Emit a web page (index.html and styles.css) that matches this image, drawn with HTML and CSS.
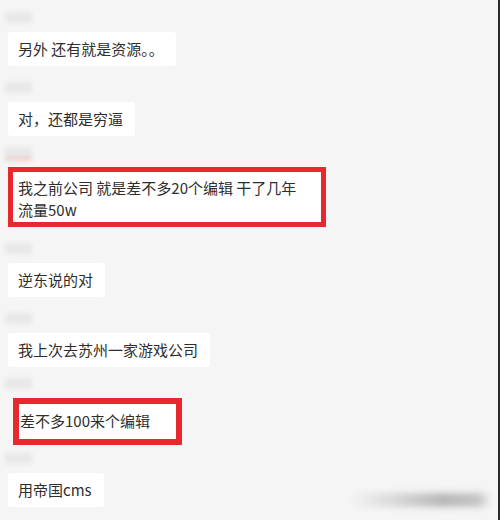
FILE: index.html
```html
<!DOCTYPE html>
<html lang="zh-CN">
<head>
    <meta charset="UTF-8">
    <meta name="viewport" content="width=device-width, initial-scale=1.0">
    <title>聊天记录</title>
    <link rel="stylesheet" href="styles.css">
</head>
<body>
    <div class="chat">
        <div class="msg">
            <div class="name"></div>
            <div class="bubble">另外 还有就是资源。。</div>
        </div>

        <div class="msg">
            <div class="name"></div>
            <div class="bubble">对，还都是穷逼</div>
        </div>

        <div class="msg hl">
            <div class="name name-red"></div>
            <div class="bubble marked wide">我之前公司 就是差不多20个编辑 干了几年<br>流量50w</div>
        </div>

        <div class="msg">
            <div class="name"></div>
            <div class="bubble">逆东说的对</div>
        </div>

        <div class="msg">
            <div class="name"></div>
            <div class="bubble">我上次去苏州一家游戏公司</div>
        </div>

        <div class="msg hl">
            <div class="name"></div>
            <div class="bubble marked thick">差不多100来个编辑</div>
        </div>

        <div class="msg tight">
            <div class="name"></div>
            <div class="bubble">用帝国cms</div>
        </div>

        <!-- blurry smear at the bottom right of the capture -->
        <div class="smear"></div>
    </div>
</body>
</html>
```

FILE: styles.css
```css
html, body {
    margin: 0;
    padding: 0;
}
body {
    font-family: "Noto Sans CJK SC", "Noto Sans", sans-serif;
    font-size: 15px;
    line-height: 22px;
    color: #2e2e2e;
    background-color: #f5f5f5;
}
.chat {
    position: relative;
    box-sizing: border-box;
    width: 500px;
    height: 520px;
    padding-top: 12px;
    border-right: 2px solid #2a2a2a;
    overflow: hidden;
}
.msg {
    display: flex;
    flex-direction: column;
    align-items: flex-start;
    margin-top: 16px;
}
.msg:first-child {
    margin-top: 0;
}
.msg.hl {
    margin-top: 11px;
}
.msg.tight {
    margin-top: 8px;
}
.name {
    width: 27px;
    height: 11px;
    margin: 0 0 9px 5px;
    background-color: #e8e8e8;
    border-radius: 3px;
    filter: blur(2px);
}
.name-red {
    box-shadow: 0 2px 0 #f0b0b0;
}
.bubble {
    margin-left: 8px;
    padding: 6px 12px 6px 10px;
    background-color: #fff;
    border-radius: 3px;
}
.bubble.marked {
    border: 5px solid #e8282d;
    border-radius: 0;
}
.bubble.wide {
    width: 298px;
    padding: 5px 5px 1px 5px;
}
.bubble.thick {
    border-width: 6px;
    margin-left: 13px;
    padding: 6px 26px 7px 1px;
}
.smear {
    position: absolute;
    left: 350px;
    top: 493px;
    width: 142px;
    height: 14px;
    border-radius: 7px;
    background: linear-gradient(to right, rgba(200, 200, 200, 0), #dadada 30%, #b8b8b8 65%, #c4c4c4 90%, rgba(200, 200, 200, 0));
    filter: blur(3px);
}
```
